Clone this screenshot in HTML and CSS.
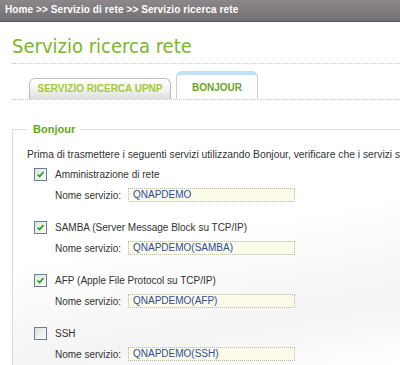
FILE: index.html
```html
<!DOCTYPE html>
<html lang="it">
  <head>
    <meta charset="UTF-8" />
    <title>Servizio ricerca rete</title>
    <link rel="stylesheet" href="styles.css">
  </head>
  <body>
    <div class="breadcrumb">Home &gt;&gt; Servizio di rete &gt;&gt; Servizio ricerca rete</div>
    <div class="page">
      <h1>Servizio ricerca rete</h1>
      <div class="tabs">
        <div class="tab">SERVIZIO RICERCA UPNP</div>
        <div class="tab active">BONJOUR</div>
      </div>
      <fieldset class="box">
        <legend>Bonjour</legend>
        <p class="intro">Prima di trasmettere i seguenti servizi utilizzando Bonjour, verificare che i servizi siano abilitati.</p>

        <div class="service">
          <div class="check-row">
            <span class="check on"><svg viewBox="0 0 13 13"><path d="M3 6.5l2.5 2.5 4.5-5.5" /></svg></span>
            <span>Amministrazione di rete</span>
          </div>
          <div class="name-row">
            <label>Nome servizio:</label>
            <div class="field">QNAPDEMO</div>
          </div>
        </div>

        <div class="service">
          <div class="check-row">
            <span class="check on"><svg viewBox="0 0 13 13"><path d="M3 6.5l2.5 2.5 4.5-5.5" /></svg></span>
            <span>SAMBA (Server Message Block su TCP/IP)</span>
          </div>
          <div class="name-row">
            <label>Nome servizio:</label>
            <div class="field">QNAPDEMO(SAMBA)</div>
          </div>
        </div>

        <div class="service">
          <div class="check-row">
            <span class="check on"><svg viewBox="0 0 13 13"><path d="M3 6.5l2.5 2.5 4.5-5.5" /></svg></span>
            <span>AFP (Apple File Protocol su TCP/IP)</span>
          </div>
          <div class="name-row">
            <label>Nome servizio:</label>
            <div class="field">QNAPDEMO(AFP)</div>
          </div>
        </div>

        <div class="service">
          <div class="check-row">
            <span class="check"></span>
            <span>SSH</span>
          </div>
          <div class="name-row">
            <label>Nome servizio:</label>
            <div class="field">QNAPDEMO(SSH)</div>
          </div>
        </div>
      </fieldset>
    </div>
  </body>
</html>
```

FILE: styles.css
```css
body {
  margin: 0;
  font-family: "Liberation Sans", Arial, sans-serif;
  background: #fff;
  overflow: hidden;
}
.breadcrumb {
  height: 21px;
  line-height: 20px;
  padding-left: 5px;
  background: linear-gradient(#8b878a, #736f72);
  border-bottom: 1px solid #4f5a6c;
  color: #fff;
  font-size: 10px;
  font-weight: bold;
  letter-spacing: 0.1px;
  white-space: nowrap;
}
.page {
  padding-left: 12px;
}
h1 {
  margin: 12px 0 0;
  padding-bottom: 5px;
  font-family: "DejaVu Sans Condensed", "DejaVu Sans", sans-serif;
  font-stretch: condensed;
  font-size: 20px;
  font-weight: normal;
  color: #79b72b;
  border-bottom: 1px dotted #c8c8c8;
}
.tabs {
  display: flex;
  align-items: flex-end;
  gap: 5px;
  margin-top: 7px;
  padding-left: 17px;
  border-bottom: 1px dotted #c8c8c8;
}
.tab {
  box-sizing: border-box;
  width: 142px;
  height: 21px;
  line-height: 20px;
  text-align: center;
  font-size: 10px;
  font-weight: bold;
  color: #a6c93a;
  border: 1px solid #bdbdbd;
  border-bottom: none;
  border-radius: 6px 6px 0 0;
  background: linear-gradient(#ffffff, #f0f0f0 60%, #dcdcdc);
}
.tab.active {
  width: 82px;
  height: 28px;
  line-height: 26px;
  color: #6aa61e;
  border-color: #cfcfcf;
  border-top: 4px solid #bfe0f6;
  background: #fff;
}
.box {
  margin: 23px 0 0;
  padding: 4px 0 0 14px;
  border: 1px solid #dcdcdc;
  border-right: none;
  border-bottom: none;
  min-height: 260px;
  background: linear-gradient(170deg, #fff 40%, #f4f4f4 70%, #fff 90%);
}
legend {
  margin-left: 0;
  padding: 0 6px;
  font-size: 11px;
  font-weight: bold;
  color: #63a81c;
}
.intro {
  margin: 10px 0 3px;
  font-size: 10.3px;
  color: #333;
  white-space: nowrap;
}
.service {
  margin-bottom: 13px;
  font-size: 10px;
  color: #333;
}
.check-row {
  display: flex;
  align-items: center;
  gap: 8px;
  height: 22px;
  padding-left: 7px;
}
.check {
  box-sizing: border-box;
  width: 13px;
  height: 13px;
  border: 1px solid #687e9b;
  background: linear-gradient(135deg, #e2e2dc, #fbfbf9);
}
.check svg {
  display: block;
  width: 11px;
  height: 11px;
  fill: none;
  stroke: #21a121;
  stroke-width: 2;
}
.name-row {
  display: flex;
  align-items: center;
  margin-top: 2px;
  padding-left: 28px;
  height: 16px;
}
.name-row label {
  width: 73px;
}
.field {
  box-sizing: border-box;
  width: 167px;
  height: 14px;
  line-height: 12px;
  padding-left: 4px;
  background: #fbfbe9;
  border: 1px dotted #b9b9a8;
  color: #2f4c9e;
}
```
